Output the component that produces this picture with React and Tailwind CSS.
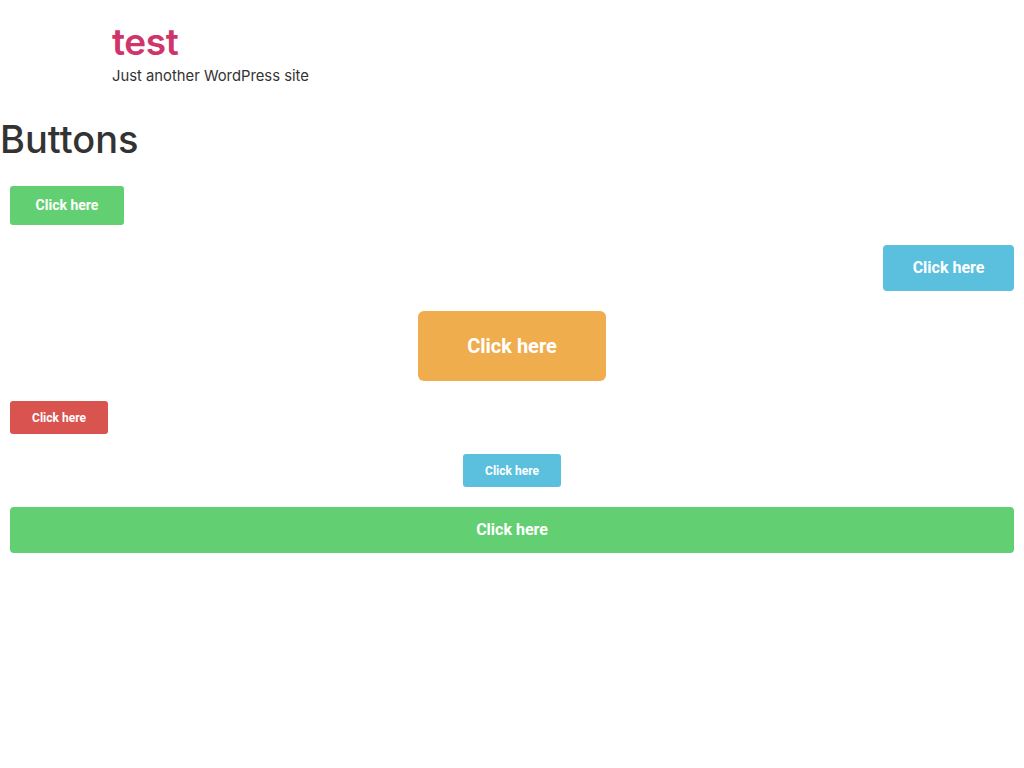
import React from 'react';

const Btn = ({ color, className, children }) => (
  <a href="#" className={`inline-flex items-center justify-center rounded-[3px] font-bold text-white ${color} ${className}`}>
    {children}
  </a>
);

const App = () => {
  return (
    <div className="min-h-[768px] bg-white text-[#333] font-['Roboto',sans-serif]">
      <header className="pl-[112px] pt-[20px] font-['Inter',sans-serif]">
        <p className="text-[37px] leading-[44px] font-semibold tracking-[-0.01em] text-[#cf356a]">test</p>
        <p className="text-[14.8px] leading-[24px] text-[#333]">Just another WordPress site</p>
      </header>

      <h1 className="mt-[26px] font-['Inter',sans-serif] text-[38px] leading-[50px] font-medium">Buttons</h1>

      <div className="flex flex-col gap-[20px] px-[10px] pt-[22px]">
        <div className="flex">
          <Btn color="bg-[#62d072]" className="h-[39px] w-[114px] text-[14px]">Click here</Btn>
        </div>
        <div className="flex justify-end">
          <Btn color="bg-[#5bc0de]" className="h-[46px] w-[131px] text-[16px] rounded-[4px]">Click here</Btn>
        </div>
        <div className="flex justify-center">
          <Btn color="bg-[#f0ad4e]" className="h-[70px] w-[188px] text-[20px] rounded-[6px]">Click here</Btn>
        </div>
        <div className="flex">
          <Btn color="bg-[#d9534f]" className="h-[33px] w-[98px] text-[12px] rounded-[2px]">Click here</Btn>
        </div>
        <div className="flex justify-center">
          <Btn color="bg-[#5bc0de]" className="h-[33px] w-[98px] text-[12px] rounded-[2px]">Click here</Btn>
        </div>
        <div className="flex">
          <Btn color="bg-[#62d072]" className="h-[46px] w-full text-[16px] rounded-[4px]">Click here</Btn>
        </div>
      </div>
    </div>
  );
};

export default App;
